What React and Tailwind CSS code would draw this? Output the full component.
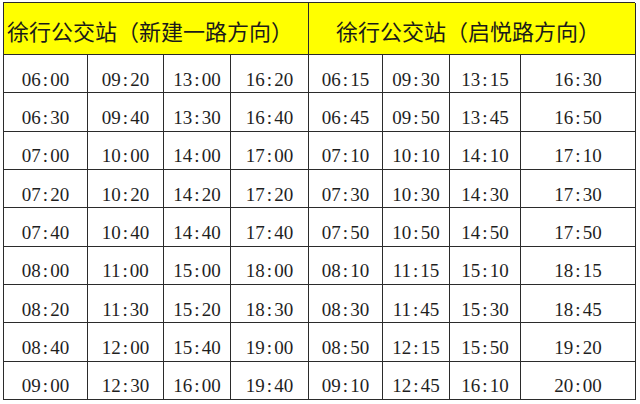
// Bus timetable for 徐行公交站, two directions side by side
const rows = [
  ['06:00', '09:20', '13:00', '16:20', '06:15', '09:30', '13:15', '16:30'],
  ['06:30', '09:40', '13:30', '16:40', '06:45', '09:50', '13:45', '16:50'],
  ['07:00', '10:00', '14:00', '17:00', '07:10', '10:10', '14:10', '17:10'],
  ['07:20', '10:20', '14:20', '17:20', '07:30', '10:30', '14:30', '17:30'],
  ['07:40', '10:40', '14:40', '17:40', '07:50', '10:50', '14:50', '17:50'],
  ['08:00', '11:00', '15:00', '18:00', '08:10', '11:15', '15:10', '18:15'],
  ['08:20', '11:30', '15:20', '18:30', '08:30', '11:45', '15:30', '18:45'],
  ['08:40', '12:00', '15:40', '19:00', '08:50', '12:15', '15:50', '19:20'],
  ['09:00', '12:30', '16:00', '19:40', '09:10', '12:45', '16:10', '20:00'],
];

function Time({ value }) {
  const [h, m] = value.split(':');
  return (
    <span>
      {h}
      <span className="mx-[2px]">:</span>
      {m}
    </span>
  );
}

export default function App() {
  return (
    <div className="w-[640px] h-[404px] bg-white pt-[2px] pl-[3px]">
      <div className="w-[632px] grid grid-cols-[84px_76px_67px_78px_74px_67px_71px_115px] grid-rows-[52px_repeat(9,38.33px)] border-l border-t border-[#2b2b2b]">
        <div
          className="col-span-4 bg-[#ffff00] border-r border-b border-[#2b2b2b] flex items-center pl-[3px] pt-[3px] text-[22px] text-[#1a1a1a]"
          style={{ fontFamily: '"Noto Sans CJK SC", sans-serif' }}
        >
          徐行公交站（新建一路方向）
        </div>
        <div
          className="col-span-4 bg-[#ffff00] border-r border-b border-[#2b2b2b] flex items-center justify-center pt-[3px] pr-[8px] text-[22px] text-[#1a1a1a]"
          style={{ fontFamily: '"Noto Sans CJK SC", sans-serif' }}
        >
          徐行公交站（启悦路方向）
        </div>
        {rows.map((row, i) =>
          row.map((t, j) => (
            <div
              key={i + '-' + j}
              className="border-r border-b border-[#2b2b2b] flex items-center justify-center pt-[11px] leading-none text-[19px] text-[#1f1f1f] font-['Liberation_Serif',serif]"
            >
              <Time value={t} />
            </div>
          ))
        )}
      </div>
    </div>
  );
}
